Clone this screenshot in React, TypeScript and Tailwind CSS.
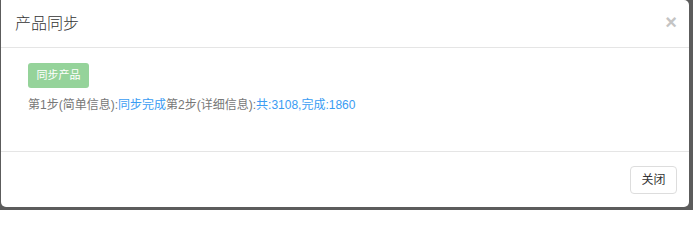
export default function App() {
  return (
    <div
      className="h-[210px] w-[693px] bg-[#5c5c5c] pl-px pr-[4px] pb-[3px]"
      style={{ fontFamily: '"Liberation Sans", "Noto Sans CJK SC", sans-serif' }}
    >
      <div className="flex h-full flex-col rounded-b-[5px] rounded-tr-[5px] bg-white">
        <div className="flex h-[48px] items-center justify-between border-b border-[#e5e5e5] pl-[14px] pr-[12px]">
          <h4 className="text-[16px] font-light leading-none text-[#333]">产品同步</h4>
          <span className="mb-[4px] text-[20px] font-bold leading-none text-[#c4c4c4]">×</span>
        </div>
        <div className="flex h-[104px] flex-col items-start border-b border-[#e5e5e5] pl-[27px] pt-[15px]">
          <button
            type="button"
            disabled
            className="h-[25px] w-[61px] rounded-[3px] bg-[#95d39a] text-[11px] text-white"
          >
            同步产品
          </button>
          <p className="mt-[8px] text-[12px] leading-[18px] text-[#777]">
            第1步(简单信息):<span className="text-[#3a9cf3]">同步完成</span>第2步(详细信息):
            <span className="text-[#3a9cf3]">共:3108,完成:1860</span>
          </p>
        </div>
        <div className="flex flex-1 items-center justify-end pr-[12px]">
          <button
            type="button"
            className="h-[28px] w-[47px] rounded-[4px] border border-[#ddd] bg-white text-[12px] text-[#333]"
          >
            关闭
          </button>
        </div>
      </div>
    </div>
  );
}
